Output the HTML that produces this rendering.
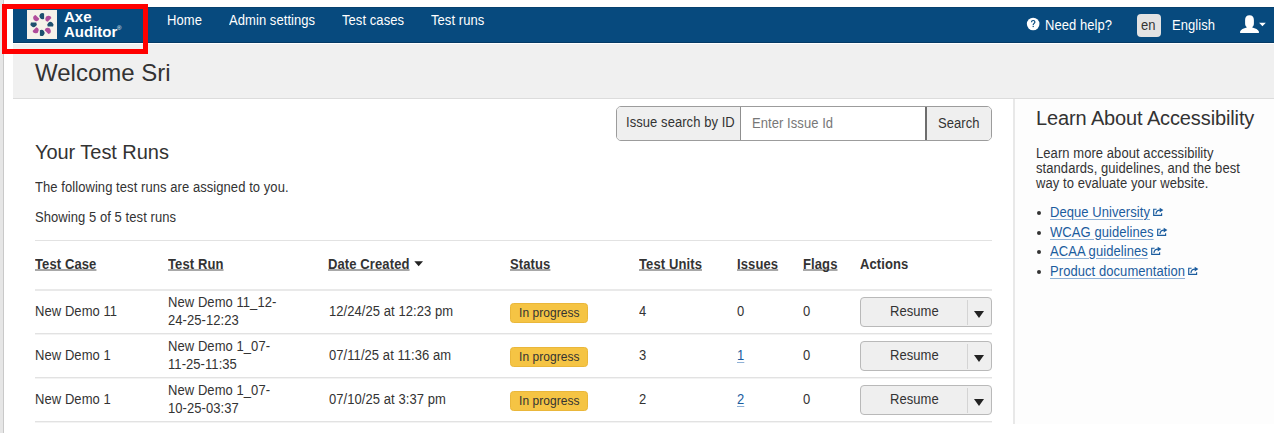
<!DOCTYPE html>
<html><head><meta charset="utf-8">
<style>
*{box-sizing:border-box;margin:0;padding:0}
html,body{width:1276px;height:433px;overflow:hidden;background:#fff}
body{position:relative;font-family:"Liberation Sans",sans-serif;font-size:13px;color:#333;line-height:15px}
.a{position:absolute;white-space:nowrap}
.x{font-size:14px;transform:scaleX(0.92857);transform-origin:0 0;letter-spacing:0.07px}
#lstrip{left:0;top:0;width:3px;height:433px;background:#e6e6e6}
#lline{left:3px;top:0;width:1px;height:433px;background:#c9c9c9}
#nav{left:13px;top:7px;width:1261px;height:36px;background:#074a7e;border-top:1px solid #06416f;border-bottom:1px solid #053a66}
#hdr{left:13px;top:44px;width:1261px;height:55px;background:#f0f0f0;border-bottom:1px solid #dcdcdc}
#divider{left:1013px;top:99px;width:2px;height:325px;background:#e8e8e8}
#side{left:1015px;top:99px;width:259px;height:325px;background:#fdfdfd}
#redbox{left:2px;top:4px;width:146px;height:50px;border:5px solid #ff0000}
.nl{color:#fff}
.hline{position:absolute;left:35px;width:957px;height:1px;background:#e2e2e2;box-shadow:0 1px 0 #f3f3f3}
.th{letter-spacing:0.12px;font-weight:700;text-decoration:underline;text-decoration-color:#a8a8a8;text-decoration-skip-ink:none;text-decoration-thickness:2px;text-underline-offset:0px;color:#333}
.badge{position:absolute;left:510px;width:78px;height:20px;background:#f5c444;border:1px solid #eab73a;border-radius:3.5px}
.btn{position:absolute;left:860px;width:132px;height:30px;background:#efefef;border:1px solid #b9b9b9;border-radius:4px}
.btn .sep{position:absolute;left:106px;top:2px;width:1px;height:25px;background:#d4d4d4}
.btn .car{position:absolute;left:113px;top:13px;width:0;height:0;border-left:5px solid transparent;border-right:5px solid transparent;border-top:7px solid #222}
.lnk{color:#1b5c9e;text-decoration:underline;text-decoration-color:#8fb1d6;text-underline-offset:1.5px}
.bul{position:absolute;left:1037px;width:4px;height:4px;border-radius:50%;background:#333}
</style></head><body>
<div id="lstrip" class="a"></div><div id="lline" class="a"></div><div id="nav" class="a"></div><div id="hdr" class="a"></div><div id="side" class="a"></div><div id="divider" class="a"></div>
<div class="a" style="left:27px;top:10px;width:30px;height:29px;background:#f5f1ea"><svg width="30" height="29" viewBox="0 0 30 29" style="display:block"><path transform="translate(15.00 6.10) rotate(0)" d="M2.1 -2.65 A3.1 3.1 0 1 0 2.1 2.65 Z" fill="#1d4f6e"/><path transform="translate(21.08 8.42) rotate(45)" d="M2.1 -2.65 A3.1 3.1 0 1 0 2.1 2.65 Z" fill="#b04b9b"/><path transform="translate(23.40 14.50) rotate(90)" d="M2.1 -2.65 A3.1 3.1 0 1 0 2.1 2.65 Z" fill="#1d4f6e"/><path transform="translate(21.08 20.58) rotate(135)" d="M2.1 -2.65 A3.1 3.1 0 1 0 2.1 2.65 Z" fill="#b04b9b"/><path transform="translate(15.00 22.90) rotate(180)" d="M2.1 -2.65 A3.1 3.1 0 1 0 2.1 2.65 Z" fill="#1d4f6e"/><path transform="translate(8.92 20.58) rotate(225)" d="M2.1 -2.65 A3.1 3.1 0 1 0 2.1 2.65 Z" fill="#b04b9b"/><path transform="translate(6.60 14.50) rotate(270)" d="M2.1 -2.65 A3.1 3.1 0 1 0 2.1 2.65 Z" fill="#1d4f6e"/><path transform="translate(8.92 8.42) rotate(315)" d="M2.1 -2.65 A3.1 3.1 0 1 0 2.1 2.65 Z" fill="#b04b9b"/></svg></div>
<div class="a" style="left:64px;top:9px;color:#fff;font-weight:700;font-size:15px;line-height:15px">Axe<br>Auditor</div>
<div class="a" style="left:117px;top:25px;color:#fff;font-size:6px;line-height:6px">&#174;</div>
<div class="a x nl" style="left:167px;top:13px;">Home</div>
<div class="a x nl" style="left:229px;top:13px;">Admin settings</div>
<div class="a x nl" style="left:342px;top:13px;">Test cases</div>
<div class="a x nl" style="left:431px;top:13px;">Test runs</div>
<svg class="a" style="left:1026px;top:17px" width="15" height="15" viewBox="0 0 15 15"><circle cx="7.15" cy="7.05" r="6.3" fill="#fff"/><path d="M5.5 5.3 C5.5 4.1 6.3 3.5 7.2 3.5 C8.2 3.5 8.9 4.1 8.9 5 C8.9 6.3 7.2 6.4 7.2 7.9" stroke="#074a7e" stroke-width="1.2" fill="none"/><rect x="6.6" y="8.8" width="1.2" height="1.3" fill="#074a7e"/></svg>
<div class="a x nl" style="left:1045px;top:18px;">Need help?</div>
<div class="a" style="left:1137px;top:14px;width:24px;height:23px;background:#e3e3e3;border-radius:4px"></div>
<div class="a x " style="left:1141px;top:18px;">en</div>
<div class="a x nl" style="left:1172px;top:18px;">English</div>
<svg class="a" style="left:1239px;top:14px" width="30" height="20" viewBox="0 0 30 20"><path d="M10.5 1.2 C7.6 1.2 6.1 2.9 6.1 5.9 L6.1 9.4 C6.1 11 6.8 12.3 7.7 13 L7.7 13.5 C4.6 14.2 1.7 15.4 1.1 17.6 L1.1 19 L19.9 19 L19.9 17.6 C19.3 15.4 16.4 14.2 13.3 13.5 L13.3 13 C14.2 12.3 14.9 11 14.9 9.4 L14.9 5.9 C14.9 2.9 13.4 1.2 10.5 1.2 Z" fill="#fff"/><path d="M20.1 8.7 L26.8 8.7 L23.45 12.3 Z" fill="#fff"/></svg>
<div class="a" style="left:35px;top:59px;font-size:24px;line-height:28px">Welcome Sri</div>
<div class="a" style="left:616px;top:106px;width:376px;height:35px;border:1px solid #9c9c9c;border-radius:5px;background:#fff;overflow:hidden"><div class="a" style="left:0;top:0;width:124px;height:33px;background:#efefef;border-right:1px solid #8f8f8f"></div><div class="a x " style="left:9px;top:8px;">Issue search by ID</div><div class="a x " style="left:135px;top:9px;color:#777">Enter Issue Id</div><div class="a" style="left:308px;top:0;width:67px;height:33px;background:#efefef;border-left:2px solid #6d6d6d"></div><div class="a x " style="left:321px;top:9px;">Search</div></div>
<div class="a" style="left:35px;top:140px;font-size:20px;line-height:24px;letter-spacing:-0.05px">Your Test Runs</div>
<div class="a x " style="left:35px;top:180px;">The following test runs are assigned to you.</div>
<div class="a x " style="left:35px;top:210px;">Showing 5 of 5 test runs</div>
<div class="hline" style="top:240px;box-shadow:none"></div>
<div class="a x th" style="left:35px;top:257px;">Test Case</div>
<div class="a x th" style="left:168px;top:257px;">Test Run</div>
<div class="a x th" style="left:328px;top:257px;">Date Created</div>
<div class="a x th" style="left:510px;top:257px;">Status</div>
<div class="a x th" style="left:639px;top:257px;">Test Units</div>
<div class="a x th" style="left:737px;top:257px;">Issues</div>
<div class="a x th" style="left:803px;top:257px;">Flags</div>
<div class="a x " style="left:860px;top:257px;font-weight:700;letter-spacing:0.12px">Actions</div>
<svg class="a" style="left:414px;top:261px" width="10" height="6" viewBox="0 0 10 6"><path d="M0.3 0.2 L9 0.2 L4.65 5.3 Z" fill="#222"/></svg>
<div class="hline" style="top:289px;height:2px;background:#e9e9e9;box-shadow:none"></div>
<div class="a x " style="left:35px;top:304px;">New Demo 11</div>
<div class="a x " style="left:168px;top:293px;line-height:18px">New Demo 11_12-<br>24-25-12:23</div>
<div class="a x " style="left:329px;top:304px;">12/24/25 at 12:23 pm</div>
<div class="badge" style="top:303px"></div>
<div class="a x " style="left:519px;top:305px;font-size:13px;transform:scaleX(0.923);letter-spacing:0.05px">In progress</div>
<div class="a x " style="left:639px;top:304px;">4</div>
<div class="a x " style="left:737px;top:304px;">0</div>
<div class="a x " style="left:803px;top:304px;">0</div>
<div class="btn" style="top:297px"><div class="sep"></div><div class="car"></div></div>
<div class="a x " style="left:890px;top:304px;">Resume</div>
<div class="hline" style="top:333px"></div>
<div class="a x " style="left:35px;top:348px;">New Demo 1</div>
<div class="a x " style="left:168px;top:337px;line-height:18px">New Demo 1_07-<br>11-25-11:35</div>
<div class="a x " style="left:329px;top:348px;">07/11/25 at 11:36 am</div>
<div class="badge" style="top:347px"></div>
<div class="a x " style="left:519px;top:349px;font-size:13px;transform:scaleX(0.923);letter-spacing:0.05px">In progress</div>
<div class="a x " style="left:639px;top:348px;">3</div>
<div class="a x lnk" style="left:737px;top:348px;">1</div>
<div class="a x " style="left:803px;top:348px;">0</div>
<div class="btn" style="top:341px"><div class="sep"></div><div class="car"></div></div>
<div class="a x " style="left:890px;top:348px;">Resume</div>
<div class="hline" style="top:377px"></div>
<div class="a x " style="left:35px;top:392px;">New Demo 1</div>
<div class="a x " style="left:168px;top:381px;line-height:18px">New Demo 1_07-<br>10-25-03:37</div>
<div class="a x " style="left:329px;top:392px;">07/10/25 at 3:37 pm</div>
<div class="badge" style="top:391px"></div>
<div class="a x " style="left:519px;top:393px;font-size:13px;transform:scaleX(0.923);letter-spacing:0.05px">In progress</div>
<div class="a x " style="left:639px;top:392px;">2</div>
<div class="a x lnk" style="left:737px;top:392px;">2</div>
<div class="a x " style="left:803px;top:392px;">0</div>
<div class="btn" style="top:385px"><div class="sep"></div><div class="car"></div></div>
<div class="a x " style="left:890px;top:392px;">Resume</div>
<div class="hline" style="top:421px"></div>
<div class="a" style="left:1036px;top:106px;font-size:20px;line-height:24px;letter-spacing:-0.12px">Learn About Accessibility</div>
<div class="a x " style="left:1036px;top:146px;">Learn more about accessibility<br>standards, guidelines, and the best<br>way to evaluate your website.</div>
<div class="bul" style="top:211.0px"></div>
<div class="a x lnk" style="left:1050px;top:205.0px;">Deque University</div>
<svg class="a" style="left:1152.5px;top:207.0px" width="11" height="9" viewBox="0 -1 11 9"><path d="M3.6 1.2 H0.7 V7.4 H8.6 V5.2" stroke="#1b5c9e" stroke-width="1.15" fill="none"/><path d="M2.9 5.9 C3.2 3.8 4.6 2.1 7.0 2.1" stroke="#1b5c9e" stroke-width="1.25" fill="none"/><path d="M6.7 -0.3 L10.4 2.1 L6.7 4.5 Z" fill="#1b5c9e"/></svg>
<div class="bul" style="top:230.6px"></div>
<div class="a x lnk" style="left:1050px;top:224.6px;">WCAG guidelines</div>
<svg class="a" style="left:1156.5px;top:226.6px" width="11" height="9" viewBox="0 -1 11 9"><path d="M3.6 1.2 H0.7 V7.4 H8.6 V5.2" stroke="#1b5c9e" stroke-width="1.15" fill="none"/><path d="M2.9 5.9 C3.2 3.8 4.6 2.1 7.0 2.1" stroke="#1b5c9e" stroke-width="1.25" fill="none"/><path d="M6.7 -0.3 L10.4 2.1 L6.7 4.5 Z" fill="#1b5c9e"/></svg>
<div class="bul" style="top:250.2px"></div>
<div class="a x lnk" style="left:1050px;top:244.2px;">ACAA guidelines</div>
<svg class="a" style="left:1150.5px;top:246.2px" width="11" height="9" viewBox="0 -1 11 9"><path d="M3.6 1.2 H0.7 V7.4 H8.6 V5.2" stroke="#1b5c9e" stroke-width="1.15" fill="none"/><path d="M2.9 5.9 C3.2 3.8 4.6 2.1 7.0 2.1" stroke="#1b5c9e" stroke-width="1.25" fill="none"/><path d="M6.7 -0.3 L10.4 2.1 L6.7 4.5 Z" fill="#1b5c9e"/></svg>
<div class="bul" style="top:269.8px"></div>
<div class="a x lnk" style="left:1050px;top:263.8px;">Product documentation</div>
<svg class="a" style="left:1188px;top:265.8px" width="11" height="9" viewBox="0 -1 11 9"><path d="M3.6 1.2 H0.7 V7.4 H8.6 V5.2" stroke="#1b5c9e" stroke-width="1.15" fill="none"/><path d="M2.9 5.9 C3.2 3.8 4.6 2.1 7.0 2.1" stroke="#1b5c9e" stroke-width="1.25" fill="none"/><path d="M6.7 -0.3 L10.4 2.1 L6.7 4.5 Z" fill="#1b5c9e"/></svg>
<div id="redbox" class="a"></div>
</body></html>
